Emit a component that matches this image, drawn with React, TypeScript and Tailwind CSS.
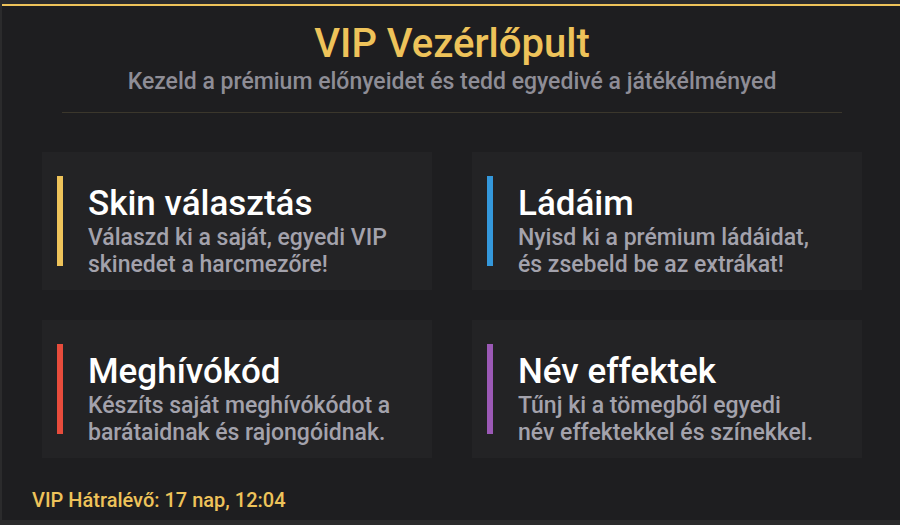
const cards = [
  {
    title: "Skin választás",
    text: ["Válaszd ki a saját, egyedi VIP", "skinedet a harcmezőre!"],
    bar: "bg-[#eec35a]",
  },
  {
    title: "Ládáim",
    text: ["Nyisd ki a prémium ládáidat,", "és zsebeld be az extrákat!"],
    bar: "bg-[#3498db]",
  },
  {
    title: "Meghívókód",
    text: ["Készíts saját meghívókódot a", "barátaidnak és rajongóidnak."],
    bar: "bg-[#e74c3c]",
  },
  {
    title: "Név effektek",
    text: ["Tűnj ki a tömegből egyedi", "név effektekkel és színekkel."],
    bar: "bg-[#9b59b6]",
  },
];

export default function App() {
  return (
    <div
      className="w-[900px] h-[525px] overflow-hidden bg-[#2b2b2c] pl-[2px] pt-[4px]"
      style={{ fontFamily: "Roboto, 'Noto Sans', sans-serif" }}
    >
      <div className="w-[900px] h-[516px] bg-[#1e1e20] border-t-2 border-[#eec35a] flex flex-col">
        <div className="pt-[14px] text-center">
          <h1 className="text-[40px] leading-[48px] font-medium text-[#eec35a]">
            VIP Vezérlőpult
          </h1>
          <p className="text-[23px] leading-[27px] font-medium text-[#8e8d96]">
            Kezeld a prémium előnyeidet és tedd egyedivé a játékélményed
          </p>
        </div>
        <div className="mx-[60px] mt-[17px] h-px bg-[#3b372c]" />
        <div className="grid grid-cols-2 gap-x-[40px] gap-y-[30px] px-[40px] mt-[39px]">
          {cards.map((c) => (
            <div key={c.title} className="h-[138px] bg-[#232325] px-[15px] pt-[24px] flex">
              <div className={`w-[6px] h-[90px] shrink-0 ${c.bar}`} />
              <div className="pl-[25px] mt-[8px]">
                <div className="text-[35px] leading-[40px] font-medium text-white">
                  {c.title}
                </div>
                <div className="text-[23px] leading-[27px] font-medium text-[#a3a2ac]">
                  {c.text[0]}
                  <br />
                  {c.text[1]}
                </div>
              </div>
            </div>
          ))}
        </div>
        <div className="mt-auto pl-[30px] pb-[8px] text-[20px] leading-[24px] font-medium text-[#eec35a]">
          VIP Hátralévő: 17 nap, 12:04
        </div>
      </div>
    </div>
  );
}
